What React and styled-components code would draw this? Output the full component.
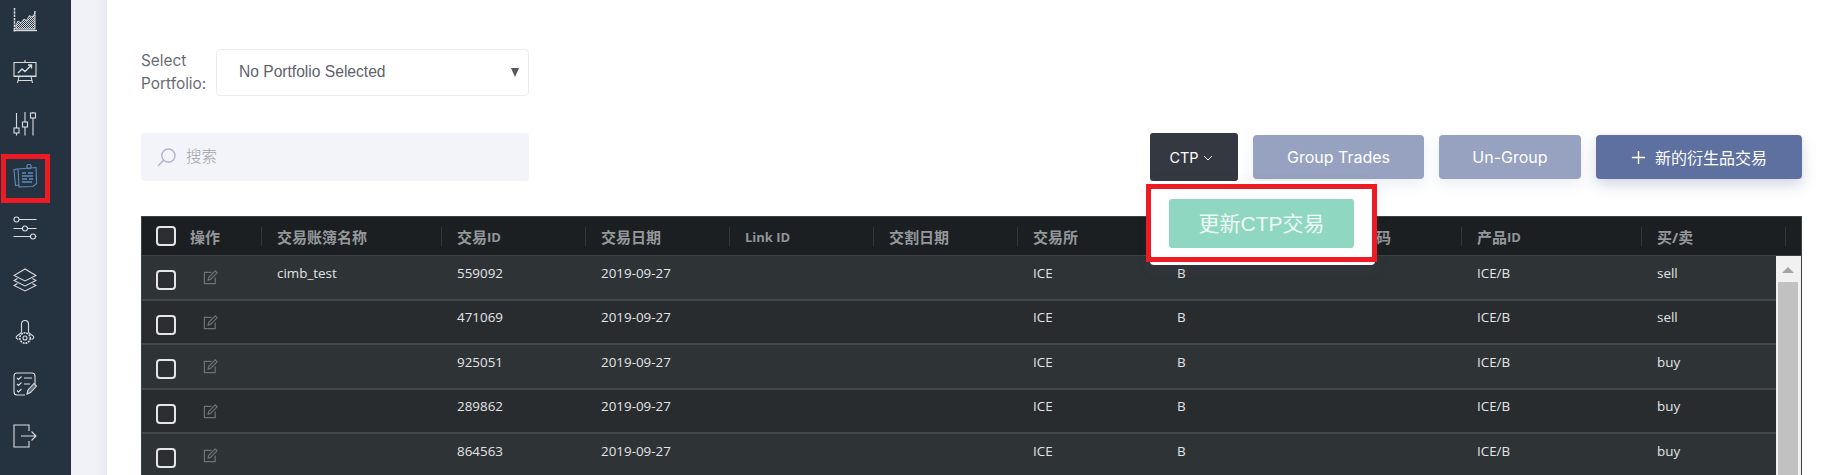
import React from "react";
import styled, { createGlobalStyle } from "styled-components";

const GlobalStyle = createGlobalStyle`
  html, body { margin: 0; padding: 0; background: #fff; }
  body { font-family: "Inter", "Noto Sans CJK SC", sans-serif; }
`;

const Page = styled.div`
  display: flex;
  width: 1833px;
  height: 475px;
  overflow: hidden;
`;

const Sidebar = styled.nav`
  flex: none;
  width: 71px;
  background: #253240;
  display: flex;
  flex-direction: column;
  gap: 28px;
  padding: 7.5px 0 0 13px;
  box-sizing: border-box;
`;

const NavIcon = styled.div`
  position: relative;
  width: 24px;
  height: 24px;
  color: ${({ active }) => (active ? "#5f8abb" : "#d9dcdf")};
  svg { display: block; width: 24px; height: 24px; fill: none; stroke: currentColor; stroke-width: 1.1; }
  ${({ active }) =>
    active &&
    `
    &::after {
      content: "";
      position: absolute;
      left: -12px;
      top: -10px;
      width: 49px;
      height: 49px;
      box-sizing: border-box;
      border: 5px solid #ed1c24;
    }
  `}
`;

const Gutter = styled.div`
  flex: none;
  width: 36px;
  background: linear-gradient(90deg, #f0f2f8 0, #f0f2f8 26px, #e8e9f0 36px);
`;

const Main = styled.main`
  flex: 1;
  min-width: 0;
  padding: 49px 31px 0 34px;
  background: #fff;
`;

const PortfolioRow = styled.div`
  display: flex;
  align-items: center;
  gap: 7px;
`;

const PortfolioLabel = styled.label`
  width: 68px;
  margin-top: -2px;
  font-size: 15.4px;
  line-height: 23px;
  color: #6a6c75;
`;

const SelectWrap = styled.div`
  position: relative;
  width: 313px;
  height: 47px;
  &::after {
    content: "";
    position: absolute;
    right: 10px;
    top: 19px;
    border-left: 4px solid transparent;
    border-right: 4px solid transparent;
    border-top: 9px solid #55565e;
  }
`;

const PortfolioSelect = styled.select`
  appearance: none;
  width: 100%;
  height: 100%;
  padding: 0 0 2px 22px;
  border: 1px solid #ebedf2;
  border-radius: 4px;
  background: #fff;
  font-family: "Liberation Sans", Arial, sans-serif;
  font-size: 15.6px;
  color: #60626b;
`;

const Toolbar = styled.div`
  display: flex;
  align-items: center;
  margin-top: 37px;
  height: 48px;
`;

const SearchBox = styled.div`
  display: flex;
  align-items: center;
  gap: 10px;
  width: 388px;
  height: 48px;
  padding: 0 0 4px 16px;
  box-sizing: border-box;
  border-radius: 4px;
  background: #f3f4f9;
  font-size: 15.5px;
  font-weight: 300;
  color: #a0a0a6;
  font-family: "Noto Sans CJK SC", sans-serif;
  svg { width: 19px; height: 19px; fill: none; stroke: #b0b3cf; stroke-width: 1.5; margin-top: 4px; }
`;

const Actions = styled.div`
  margin-left: auto;
  display: flex;
  align-items: center;
  gap: 15px;
`;

const CtpWrap = styled.div`
  position: relative;
`;

const CtpButton = styled.button`
  display: flex;
  align-items: center;
  justify-content: center;
  gap: 3px;
  width: 88px;
  height: 48px;
  padding: 0 5px 0 0;
  border: 0;
  border-radius: 3px;
  background: #343841;
  color: #fff;
  font: 400 14.5px "Inter", sans-serif;
  svg { width: 12px; height: 12px; margin-top: 2px; }
`;

const Menu = styled.div`
  position: absolute;
  z-index: 3;
  top: 48px;
  left: 0;
  width: 225px;
  height: 84px;
  border-radius: 4px;
  background: #fff;
  box-shadow: 0 4px 14px rgba(80, 90, 130, 0.12);
  &::after {
    content: "";
    position: absolute;
    left: -4px;
    top: 3px;
    width: 231px;
    height: 78px;
    box-sizing: border-box;
    border: 5px solid #ed1c24;
    pointer-events: none;
  }
`;

const MenuButton = styled.button`
  position: absolute;
  left: 19px;
  top: 18px;
  width: 185px;
  height: 49px;
  padding: 0 0 4px;
  border: 0;
  border-radius: 3px;
  background: #90d7c1;
  color: #eefaf6;
  font: 400 21px "Liberation Sans", "Noto Sans CJK SC", sans-serif;
`;

const ActionButton = styled.button`
  display: flex;
  align-items: center;
  justify-content: center;
  gap: 9px;
  width: ${({ width }) => width}px;
  height: 44px;
  padding: 0;
  border: 0;
  border-radius: 4px;
  background: ${({ primary }) => (primary ? "#5e70a0" : "#96a2bf")};
  color: #fff;
  font: 400 16px "Inter", "Noto Sans CJK SC", sans-serif;
  box-shadow: 0 6px 14px rgba(94, 112, 160, ${({ primary }) => (primary ? 0.28 : 0.12)});
  svg { width: 15px; height: 15px; }
`;

const Table = styled.div`
  margin-top: 35px;
  border: 1px solid #3b3f42;
  border-bottom: 0;
  background: #1c1f21;
  font-family: "Open Sans", "Noto Sans CJK SC", sans-serif;
`;

const columns = "119px 180px 144px 144px 144px 144px 144px 300px 180px 144px 1fr";

const HeadRow = styled.div`
  display: grid;
  grid-template-columns: ${columns};
  align-items: center;
  height: 38px;
  border-bottom: 1px solid #3b3f42;
`;

const HeadCell = styled.div`
  display: flex;
  align-items: center;
  height: 19px;
  padding-left: ${({ first }) => (first ? 14 : 15)}px;
  padding-right: ${({ tail }) => (tail ? 70 : 0)}px;
  justify-content: ${({ tail }) => (tail ? "flex-end" : "flex-start")};
  gap: ${({ first }) => (first ? 14 : 0)}px;
  border-left: ${({ first }) => (first ? 0 : "1px solid #33373a")};
  font-size: 15px;
  font-weight: 700;
  color: #94989c;
  white-space: nowrap;
`;

const HeadLatin = styled.span`
  margin-top: 2px;
  font-size: 13px;
  color: #8f959b;
`;

const Body = styled.div`
  display: flex;
`;

const Rows = styled.div`
  flex: 1;
  min-width: 0;
`;

const Row = styled.div`
  display: grid;
  grid-template-columns: ${columns};
  height: 44.5px;
  box-sizing: border-box;
  border-bottom: 2px solid #45484b;
  background: ${({ odd }) => (odd ? "#2e3336" : "#282c2f")};
`;

const Cell = styled.div`
  padding: 6.5px 0 0 16px;
  font-size: 13.4px;
  line-height: 20px;
  font-weight: 500;
  color: #e3e4e5;
  white-space: nowrap;
`;

const ControlCell = styled.div`
  display: flex;
  align-items: flex-start;
  gap: 27px;
  padding: 14px 0 0 14px;
  svg { width: 15px; height: 15px; fill: none; stroke: #6f7275; stroke-width: 1.3; }
`;

const Check = styled.span`
  flex: none;
  width: 20px;
  height: 20px;
  box-sizing: border-box;
  border: 2px solid #e4e5e6;
  border-radius: 4px;
  background: #2b2f33;
`;

const Scrollbar = styled.div`
  flex: none;
  width: 25px;
  background: #f1f1f1;
  padding: 0 3px 0 2px;
  box-sizing: border-box;
`;

const ScrollArrow = styled.div`
  height: 26px;
  display: flex;
  justify-content: center;
  padding-top: 11px;
  box-sizing: border-box;
  &::before {
    content: "";
    border-left: 6px solid transparent;
    border-right: 6px solid transparent;
    border-bottom: 6px solid #a3a3a3;
    height: 0;
  }
`;

const ScrollThumb = styled.div`
  height: 300px;
  background: #c1c1c1;
`;

const AreaIcon = () => (
  <svg viewBox="0 0 24 24">
    <defs>
      <pattern id="stipple" width="2" height="2" patternUnits="userSpaceOnUse">
        <rect width="1" height="1" fill="#d9dcdf" stroke="none" />
        <rect x="1" y="1" width="1" height="1" fill="#d9dcdf" stroke="none" />
      </pattern>
    </defs>
    <path d="M1.5 0v23.5" strokeWidth="1.5" strokeDasharray="2.5 .8" />
    <path d="M.5 22.5h23.5" strokeWidth="1.4" />
    <path d="M3 21v-4l2-4 3 2 3-4 2.5 1.5 3-5 2.5 1.5 2.5-3 .5-3v18z" fill="url(#stipple)" strokeWidth=".9" />
  </svg>
);

const BoardIcon = () => (
  <svg viewBox="0 0 24 24">
    <path d="M12 0v2M.5 2.5h23M1 2.5v13.5h22V2.5M.5 16.5h23M6 16.5 4.5 23M18 16.5l1.5 6.5M5 20.5h14" />
    <path d="m5 13 4-4 3 2.5 6-6M15 5h3.5v3.5" strokeWidth="1.3" />
  </svg>
);

const TuneIcon = () => (
  <svg viewBox="0 0 24 24" strokeWidth="1.3">
    <path d="M3.5 1v15M3.5 21v2.5M12 0v10M12 15v8.5M20 6v17.5M20 0v1" />
    <rect x="1" y="16" width="5" height="5" />
    <rect x="9.5" y="10" width="5" height="5" />
    <rect x="17.5" y="1" width="5" height="5" />
  </svg>
);

const NoteIcon = () => (
  <svg viewBox="0 0 24 24" strokeWidth=".9">
    <path d="M5 5 1 5.5 2.5 21.5 6 21" />
    <path d="M5 5 23 3.5l.7 16-3.7 3-14 .5z" />
    <circle cx="16" cy="2.5" r="2.2" />
    <path d="M9 9h4M15 9h5M9 12h11M9 15h5M9 18h10M16 15h4" strokeWidth="1.4" />
  </svg>
);

const SlidersIcon = () => (
  <svg viewBox="0 0 24 24" strokeWidth="1.4">
    <path d="M6 3.5h17.5M.5 12.5h8.5M15 12.5h8.5M.5 20.5h16.5M22.5 20.5h1" />
    <circle cx="3.5" cy="3.5" r="2.5" />
    <circle cx="12" cy="12.5" r="2.5" />
    <circle cx="20" cy="20.5" r="2.5" />
  </svg>
);

const LayersIcon = () => (
  <svg viewBox="0 0 24 24" strokeWidth="1.3">
    <path d="M12 1 1 7.5 12 13l11-5.5z" />
    <path d="m4.5 10.5-3.5 2L12 18l11-5.5-3.5-2" />
    <path d="m4.5 15.5-3.5 2L12 23l11-5.5-3.5-2" />
  </svg>
);

const ProbeIcon = () => (
  <svg viewBox="0 0 24 24" strokeWidth="1.3">
    <path d="M8.5 12V4a3.5 3.5 0 0 1 7 0v8c0 1.5 4 3 5 4.5.8 1.5-.5 3-2 2.5M8.5 12c0 1.5-4 3-5 4.5-.8 1.5.5 3 2 2.5" />
    <circle cx="12" cy="18" r="5.2" strokeDasharray="2 .8" strokeWidth="1.6" />
    <circle cx="12" cy="18" r="2" />
  </svg>
);

const ChecklistIcon = () => (
  <svg viewBox="0 0 24 24" strokeWidth="1.2">
    <path d="M12 23H4a3 3 0 0 1-3-3V4a3 3 0 0 1 3-3h15a3 3 0 0 1 3 3v8" />
    <path d="m4 6 1.5 1.5 3-3M4 12l1.5 1.5 3-3M4 18.5 5.5 20l3-3M11 6h8M11 12h6" />
    <path d="m14 22 1-4 6-6.5 2.5 2.5-6 6.5z" fill="currentColor" fillOpacity=".35" />
  </svg>
);

const ExitIcon = () => (
  <svg viewBox="0 0 24 24" strokeWidth="1.3">
    <path d="M16 7V1H1v22h15v-6" />
    <path d="M8 12h15M18.5 7.5 23 12l-4.5 4.5" />
  </svg>
);

const EditIcon = () => (
  <svg viewBox="0 0 16 16">
    <path d="M9 2.5H1.5V14.5H13V8" />
    <path d="M5.5 10.8 6 8l7-7 2 2-7 7z" />
  </svg>
);

const SearchIcon = () => (
  <svg viewBox="0 0 20 20">
    <circle cx="12" cy="8" r="7" />
    <path d="M7 13 1 19" />
  </svg>
);

const trades = [
  { name: "cimb_test", id: "559092", side: "sell" },
  { name: "", id: "471069", side: "sell" },
  { name: "", id: "925051", side: "buy" },
  { name: "", id: "289862", side: "buy" },
  { name: "", id: "864563", side: "buy" },
];

const navIcons = [AreaIcon, BoardIcon, TuneIcon, NoteIcon, SlidersIcon, LayersIcon, ProbeIcon, ChecklistIcon, ExitIcon];

const App = () => (
  <Page>
    <GlobalStyle />
    <Sidebar>
      {navIcons.map((Icon, i) => (
        <NavIcon key={i} active={i === 3}>
          <Icon />
        </NavIcon>
      ))}
    </Sidebar>
    <Gutter />
    <Main>
      <PortfolioRow>
        <PortfolioLabel>Select Portfolio:</PortfolioLabel>
        <SelectWrap>
          <PortfolioSelect defaultValue="none">
            <option value="none">No Portfolio Selected</option>
          </PortfolioSelect>
        </SelectWrap>
      </PortfolioRow>

      <Toolbar>
        <SearchBox>
          <SearchIcon />
          搜索
        </SearchBox>
        <Actions>
          <CtpWrap>
            <CtpButton>
              CTP
              <svg viewBox="0 0 12 12" fill="none" stroke="#fff" strokeWidth="1">
                <path d="m2 4 4 4 4-4" />
              </svg>
            </CtpButton>
            <Menu>
              <MenuButton>更新CTP交易</MenuButton>
            </Menu>
          </CtpWrap>
          <ActionButton width={171}>Group Trades</ActionButton>
          <ActionButton width={142}>Un-Group</ActionButton>
          <ActionButton width={206} primary>
            <svg viewBox="0 0 17 17" fill="none" stroke="#fff" strokeWidth="1.6">
              <path d="M8.5 1v15M1 8.5h15" />
            </svg>
            新的衍生品交易
          </ActionButton>
        </Actions>
      </Toolbar>

      <Table>
        <HeadRow>
          <HeadCell first>
            <Check />
            操作
          </HeadCell>
          <HeadCell>交易账簿名称</HeadCell>
          <HeadCell>
            交易<HeadLatin>ID</HeadLatin>
          </HeadCell>
          <HeadCell>交易日期</HeadCell>
          <HeadCell>
            <HeadLatin>Link ID</HeadLatin>
          </HeadCell>
          <HeadCell>交割日期</HeadCell>
          <HeadCell>交易所</HeadCell>
          <HeadCell tail>合约代码</HeadCell>
          <HeadCell>
            产品<HeadLatin>ID</HeadLatin>
          </HeadCell>
          <HeadCell>买/卖</HeadCell>
          <HeadCell />
        </HeadRow>
        <Body>
          <Rows>
            {trades.map((t, i) => (
              <Row key={t.id} odd={i % 2 === 0}>
                <ControlCell>
                  <Check />
                  <EditIcon />
                </ControlCell>
                <Cell>{t.name}</Cell>
                <Cell>{t.id}</Cell>
                <Cell>2019-09-27</Cell>
                <Cell />
                <Cell />
                <Cell>ICE</Cell>
                <Cell>B</Cell>
                <Cell>ICE/B</Cell>
                <Cell>{t.side}</Cell>
              </Row>
            ))}
          </Rows>
          <Scrollbar>
            <ScrollArrow />
            <ScrollThumb />
          </Scrollbar>
        </Body>
      </Table>
    </Main>
  </Page>
);

export default App;
